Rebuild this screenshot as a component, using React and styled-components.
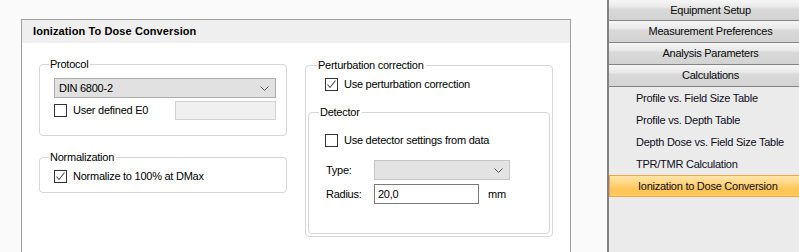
import React from 'react';
import styled, { createGlobalStyle } from 'styled-components';

const GlobalStyle = createGlobalStyle`
  html, body {
    margin: 0;
    padding: 0;
    background: #fafafa;
    overflow: hidden;
  }
  body {
    font-family: "Liberation Sans", Arial, sans-serif;
    font-size: 11px;
    color: #000;
  }
  * { box-sizing: border-box; }
`;

const Screen = styled.div`
  display: flex;
  width: 799px;
  height: 252px;
  overflow: hidden;
`;

const ContentArea = styled.div`
  width: 607px;
  flex: none;
  padding: 19px 0 0 21px;
`;

const Panel = styled.div`
  width: 550px;
  height: 100%;
  border: 1px solid #a0a0a0;
  border-bottom: none;
  background: #fff;
`;

const PanelHeader = styled.div`
  height: 23px;
  line-height: 23px;
  padding-left: 11px;
  background: #efefef;
  font-weight: bold;
  font-size: 11px;
  letter-spacing: 0.1px;
`;

const PanelBody = styled.div`
  display: flex;
  align-items: flex-start;
  padding-left: 17px;
  gap: 18px;
`;

const Column = styled.div`
  display: flex;
  flex-direction: column;
  width: 248px;
  margin-top: ${p => p.$top}px;
`;

const Group = styled.div`
  position: relative;
  border: 1px solid #d6d6d6;
  border-radius: 4px;
  margin: ${p => p.$margin || '0'};
  padding: ${p => p.$pad};
  display: flex;
  flex-direction: column;
`;

const Legend = styled.span`
  position: absolute;
  top: -7px;
  left: ${p => p.$left || 9}px;
  padding: 0 2px 0 1px;
  background: #fff;
  line-height: 13px;
  letter-spacing: -0.25px;
`;

const Row = styled.div`
  display: flex;
  align-items: center;
  height: ${p => p.$h || 13}px;
  margin-top: ${p => p.$mt || 0}px;
`;

const Label = styled.span`
  line-height: 13px;
  letter-spacing: -0.25px;
  white-space: nowrap;
  margin-left: ${p => p.$ml || 0}px;
  width: ${p => (p.$w ? `${p.$w}px` : 'auto')};
`;

const Box = styled.span`
  width: 13px;
  height: 13px;
  flex: none;
  border: 1px solid #333;
  background: #fff;
  display: flex;
  align-items: center;
  justify-content: center;
`;

const Select = styled.div`
  display: flex;
  align-items: center;
  justify-content: space-between;
  width: ${p => p.$w}px;
  height: ${p => p.$h || 20}px;
  padding: 0 6px 0 4px;
  background: ${p => (p.$disabled ? '#e3e3e3' : '#e1e1e1')};
  border: 1px solid ${p => (p.$disabled ? '#c6c6c6' : '#adadad')};
  letter-spacing: -0.25px;
`;

const TextInput = styled.div`
  width: ${p => p.$w}px;
  height: ${p => p.$h || 20}px;
  margin-left: ${p => p.$ml || 0}px;
  padding: 0 3px;
  display: flex;
  align-items: center;
  background: ${p => (p.$disabled ? '#f0f0f0' : '#fff')};
  border: 1px solid ${p => (p.$disabled ? '#d2d2d2' : '#7a7a7a')};
  letter-spacing: -0.25px;
`;

const Sidebar = styled.div`
  width: 205px;
  flex: none;
  border-left: 2px solid #828282;
  background: #ebebeb;
  display: flex;
  flex-direction: column;
`;

const NavButton = styled.div`
  height: ${p => p.$h || 22}px;
  border-bottom: 1px solid #858585;
  background: linear-gradient(#f6f6f6 0%, #e9e9e9 35%, #d9d9d9 45%, #d3d3d3 100%);
  text-align: center;
  line-height: ${p => (p.$h || 22) - 1}px;
  letter-spacing: -0.25px;
  color: #0a0a0a;
`;

const NavItem = styled.div`
  height: 22px;
  line-height: ${p => (p.$active ? 20 : 22)}px;
  padding-left: ${p => (p.$active ? 28 : 27)}px;
  letter-spacing: -0.25px;
  color: #0d0d22;
  ${p =>
    p.$active &&
    `
    background: linear-gradient(#ffe6aa 0%, #ffd47c 40%, #ffc453 70%, #ffcb62 100%);
    border: 1px solid #f3a43a;
    border-right: none;
  `}
`;

function Chevron() {
  return (
    <svg width="9" height="5" viewBox="0 0 9 5">
      <path d="M0.5 0.5 L4.5 4.5 L8.5 0.5" fill="none" stroke="#555" strokeWidth="1" />
    </svg>
  );
}

function CheckBox({ checked }) {
  return (
    <Box>
      {checked && (
        <svg width="11" height="11" viewBox="0 0 11 11">
          <path d="M1.5 5.5 L4 8.5 L9.5 1.5" fill="none" stroke="#4a4a4a" strokeWidth="1.1" />
        </svg>
      )}
    </Box>
  );
}

const navButtons = ['Equipment Setup', 'Measurement Preferences', 'Analysis Parameters', 'Calculations'];
const navItems = [
  'Profile vs. Field Size Table',
  'Profile vs. Depth Table',
  'Depth Dose vs. Field Size Table',
  'TPR/TMR Calculation',
  'Ionization to Dose Conversion',
];

export default function App() {
  return (
    <Screen>
      <GlobalStyle />
      <ContentArea>
        <Panel>
          <PanelHeader>Ionization To Dose Conversion</PanelHeader>
          <PanelBody>
            <Column $top={21}>
              <Group $pad="13px 10px 15px 14px">
                <Legend>Protocol</Legend>
                <Select $w={222}>
                  <span>DIN 6800-2</span>
                  <Chevron />
                </Select>
                <Row $h={19} $mt={3}>
                  <CheckBox />
                  <Label $ml={6}>User defined E0</Label>
                  <TextInput $disabled $w={101} $h={19} style={{ marginLeft: 'auto' }} />
                </Row>
              </Group>
              <Group $pad="12px 10px 9px 14px" $margin="21px 0 0 0">
                <Legend>Normalization</Legend>
                <Row>
                  <CheckBox checked />
                  <Label $ml={6}>Normalize to 100% at DMax</Label>
                </Row>
              </Group>
            </Column>
            <Column $top={22}>
              <Group $pad="12px 2px 2px 2px">
                <Legend $left={11}>Perturbation correction</Legend>
                <Row style={{ paddingLeft: 17 }}>
                  <CheckBox checked />
                  <Label $ml={6}>Use perturbation correction</Label>
                </Row>
                <Group $pad="21px 10px 29px 16px" $margin="21px 0 0 0">
                  <Legend $left={10}>Detector</Legend>
                  <Row>
                    <CheckBox />
                    <Label $ml={6}>Use detector settings from data</Label>
                  </Row>
                  <Row $h={20} $mt={13} style={{ paddingLeft: 1 }}>
                    <Label $w={48}>Type:</Label>
                    <Select $disabled $w={136}>
                      <span />
                      <Chevron />
                    </Select>
                  </Row>
                  <Row $h={20} $mt={4} style={{ paddingLeft: 1 }}>
                    <Label $w={48}>Radius:</Label>
                    <TextInput $w={105}>20,0</TextInput>
                    <Label $ml={9}>mm</Label>
                  </Row>
                </Group>
              </Group>
            </Column>
          </PanelBody>
        </Panel>
      </ContentArea>
      <Sidebar>
        {navButtons.map((b, i) => (
          <NavButton key={b} $h={i === 0 ? 21 : 22}>
            {b}
          </NavButton>
        ))}
        {navItems.map((item, i) => (
          <NavItem key={item} $active={i === navItems.length - 1}>
            {item}
          </NavItem>
        ))}
      </Sidebar>
    </Screen>
  );
}
